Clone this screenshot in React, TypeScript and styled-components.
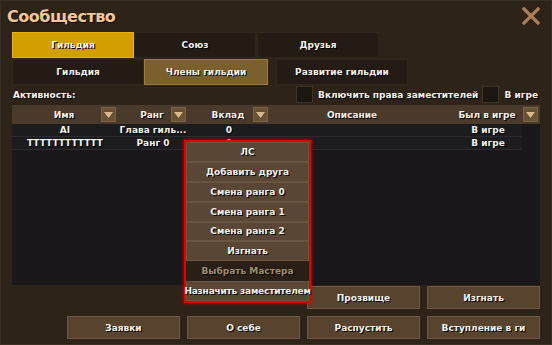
import React from "react";
import styled, { createGlobalStyle } from "styled-components";

const Global = createGlobalStyle`
  html, body { margin: 0; padding: 0; background: #2d2319; }
  * { box-sizing: border-box; }
`;

const FONT = `"DejaVu Sans", "Liberation Sans", sans-serif`;

const Window = styled.div`
  position: relative;
  width: 552px;
  height: 345px;
  background: #2d2319;
  border: 1px solid #3b2f23;
  font-family: ${FONT};
  font-weight: bold;
  color: #f4f0ea;
  font-size: 9px;
  display: flex;
  flex-direction: column;
  overflow: hidden;
`;

const TitleBar = styled.div`
  height: 31px;
  display: flex;
  align-items: center;
  justify-content: space-between;
  padding: 0 11px 0 6px;
`;

const Title = styled.div`
  font-size: 16px;
  color: #f3c79b;
  text-shadow: 1px 1px 0 #120c07;
  letter-spacing: -0.5px;
`;

const Close = styled.svg`
  width: 18px;
  height: 18px;
  margin-top: -2px;
`;

const TabRow = styled.div<{ $mt?: number }>`
  display: flex;
  margin: ${(p) => p.$mt ?? 0}px 0 0 11px;
  height: 26px;
`;

const Tab = styled.div<{ $w: number; $kind?: "gold" | "active" | "plain"; $ml?: number }>`
  width: ${(p) => p.$w}px;
  margin-left: ${(p) => p.$ml ?? 0}px;
  display: flex;
  align-items: center;
  justify-content: center;
  text-shadow: 1px 1px 0 #000;
  border: 1px solid
    ${(p) => (p.$kind === "gold" ? "#e9b20a" : p.$kind === "active" ? "#9b7b3f" : "#2f261c")};
  background: ${(p) => (p.$kind === "gold" ? "#d19f00" : p.$kind === "active" ? "#7b5f2d" : "#241c14")};
`;

const FilterRow = styled.div`
  height: 21px;
  display: flex;
  align-items: center;
  padding: 0 13px 0 12px;
  margin-top: -1px;
`;

const Label = styled.span<{ $grow?: boolean }>`
  text-shadow: 1px 1px 0 #000;
  flex: ${(p) => (p.$grow ? 1 : "none")};
  white-space: nowrap;
`;

const Check = styled.div`
  width: 17px;
  height: 17px;
  background: #1b1610;
  border: 1px solid #3e3226;
  margin: 0 5px 0 4px;
`;

const Table = styled.div`
  margin: 0 11px 0 11px;
  height: 180px;
  background: #19171a;
  display: flex;
  flex-direction: column;
`;

const COLS = "106px 70px 82px 166px 104px";

const Header = styled.div`
  height: 19px;
  background: #4a3a2b;
  display: grid;
  grid-template-columns: ${COLS};
`;

const HeadCell = styled.div`
  display: grid;
  align-items: center;
  padding-right: 2px;
  & > * { grid-area: 1 / 1; }
`;

const HeadLabel = styled.span`
  justify-self: center;
  text-shadow: 1px 1px 0 #000;
  white-space: nowrap;
`;

const Arrow = styled.span`
  justify-self: end;
  width: 15px;
  height: 15px;
  background: #6a5237;
  border: 1px solid #7b6245;
  display: flex;
  align-items: center;
  justify-content: center;
`;

const Row = styled.div`
  display: grid;
  grid-template-columns: ${COLS};
  height: 13px;
  align-items: center;
  background: #1c1b1e;
  margin-right: 18px;
  border-bottom: 1px solid #2b2a2d;
  & > span { justify-self: center; text-shadow: 1px 1px 0 #000; white-space: nowrap; }
`;

const Menu = styled.div`
  position: absolute;
  left: 183px;
  top: 139px;
  width: 127px;
  height: 163px;
  border: 2px solid #e00000;
  box-shadow: 0 0 3px 1px rgba(220, 0, 0, 0.6);
  background: #2a1e16;
  display: flex;
  flex-direction: column;
`;

const MenuItem = styled.div<{ $disabled?: boolean; $tight?: boolean }>`
  height: 20px;
  display: flex;
  align-items: center;
  justify-content: center;
  white-space: nowrap;
  background: ${(p) => (p.$disabled ? "#2a1f17" : "#5a4634")};
  border: 1px solid ${(p) => (p.$disabled ? "#2a1f17" : "#6a5542")};
  color: ${(p) => (p.$disabled ? "#a38d72" : "#f4f0ea")};
  text-shadow: 1px 1px 0 #000;
  letter-spacing: ${(p) => (p.$tight ? "-0.2px" : "0")};
  overflow: visible;
`;

const ButtonRow = styled.div<{ $mt: number }>`
  display: flex;
  justify-content: flex-end;
  gap: 7px;
  margin-top: ${(p) => p.$mt}px;
  padding-right: 11px;
`;

const Button = styled.div`
  width: 113px;
  height: 23px;
  background: #58432f;
  border: 1px solid #6f5843;
  display: flex;
  align-items: center;
  justify-content: center;
  text-shadow: 1px 1px 0 #000;
  white-space: nowrap;
  overflow: hidden;
`;

const ArrowIcon = () => (
  <svg width="9" height="6" viewBox="0 0 9 6">
    <polygon points="0,0 9,0 4.5,6" fill="#d9b98c" />
  </svg>
);

const cols = ["Имя", "Ранг", "Вклад", "Описание", "Был в игре"];
const arrows = [true, true, true, false, true];

export default function App() {
  return (
    <>
      <Global />
      <Window>
        <TitleBar>
          <Title>Сообщество</Title>
          <Close viewBox="0 0 18 18">
            <path d="M2 2 L16 16 M16 2 L2 16" stroke="#b07d58" strokeWidth="3.2" strokeLinecap="square" />
          </Close>
        </TitleBar>
        <TabRow $mt={0}>
          <Tab $w={122} $kind="gold">Гильдия</Tab>
          <Tab $w={122}>Союз</Tab>
          <Tab $w={122} $ml={1}>Друзья</Tab>
        </TabRow>
        <TabRow $mt={1}>
          <Tab $w={132}>Гильдия</Tab>
          <Tab $w={124} $kind="active">Члены гильдии</Tab>
          <Tab $w={132} $ml={8}>Развитие гильдии</Tab>
        </TabRow>
        <FilterRow>
          <Label $grow>Активность:</Label>
          <Check />
          <Label>Включить права заместителей</Label>
          <Check />
          <Label>В игре</Label>
        </FilterRow>
        <Table>
          <Header>
            {cols.map((c, i) => (
              <HeadCell key={c}>
                <HeadLabel>{c}</HeadLabel>
                {arrows[i] && (
                  <Arrow>
                    <ArrowIcon />
                  </Arrow>
                )}
              </HeadCell>
            ))}
          </Header>
          <Row>
            <span>AI</span>
            <span>Глава гиль...</span>
            <span>0</span>
            <span></span>
            <span>В игре</span>
          </Row>
          <Row>
            <span>TTTTTTTTTTTT</span>
            <span>Ранг 0</span>
            <span>0</span>
            <span></span>
            <span>В игре</span>
          </Row>
        </Table>
        <ButtonRow $mt={1}>
          <Button>Прозвище</Button>
          <Button>Изгнать</Button>
        </ButtonRow>
        <ButtonRow $mt={7}>
          <Button>Заявки</Button>
          <Button>О себе</Button>
          <Button>Распустить</Button>
          <Button>Вступление в ги</Button>
        </ButtonRow>
        <Menu>
          <MenuItem>ЛС</MenuItem>
          <MenuItem>Добавить друга</MenuItem>
          <MenuItem>Смена ранга 0</MenuItem>
          <MenuItem>Смена ранга 1</MenuItem>
          <MenuItem>Смена ранга 2</MenuItem>
          <MenuItem>Изгнать</MenuItem>
          <MenuItem $disabled>Выбрать Мастера</MenuItem>
          <MenuItem $tight>Назначить заместителем</MenuItem>
        </Menu>
      </Window>
    </>
  );
}
